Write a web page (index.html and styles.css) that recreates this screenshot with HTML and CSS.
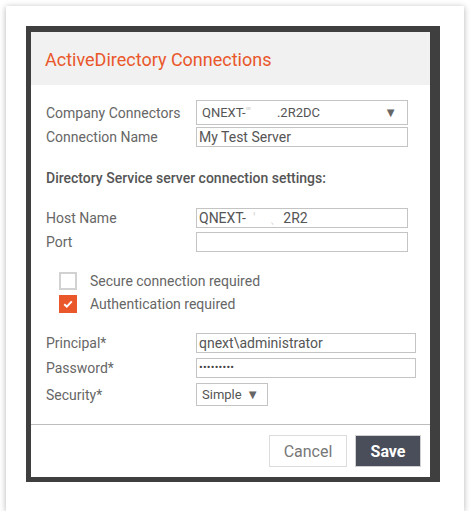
FILE: index.html
```html
<!DOCTYPE html>
<html lang="en">
<head>
  <meta charset="UTF-8" />
  <title>ActiveDirectory Connections</title>
  <link rel="stylesheet" href="styles.css">
</head>
<body>

  <div class="sheet">
    <div class="dialog">
      <div class="dialog-header">
        <h1>ActiveDirectory Connections</h1>
      </div>

      <div class="dialog-body">
        <div class="row row-select">
          <label>Company Connectors</label>
          <div class="select wide">
            <span>QNEXT-<span class="blur">'''</span>&nbsp;&nbsp;&nbsp;&nbsp;&nbsp;&nbsp;&nbsp;&nbsp;.2R2DC</span>
            <span class="arrow">&#9660;</span>
          </div>
        </div>
        <div class="row row-name">
          <label>Connection Name</label>
          <div class="input wide">My Test Server</div>
        </div>

        <div class="section-title">Directory Service server connection settings:</div>

        <div class="row row-host">
          <label>Host Name</label>
          <div class="input wide">QNEXT-<span class="blur">&nbsp;&nbsp;'&nbsp;&nbsp;&nbsp;&nbsp;&#12289;</span>2R2</div>
        </div>
        <div class="row row-port">
          <label>Port</label>
          <div class="input wide"></div>
        </div>

        <div class="check check-first">
          <span class="box"></span>
          <span>Secure connection required</span>
        </div>
        <div class="check">
          <span class="box checked">
            <svg width="10" height="8" viewBox="0 0 10 8"><path d="M1.2 4.2 L3.8 6.6 L8.8 1.4" fill="none" stroke="#fff" stroke-width="2"/></svg>
          </span>
          <span>Authentication required</span>
        </div>

        <div class="row row-principal">
          <label>Principal*</label>
          <div class="input wider">qnext\administrator</div>
        </div>
        <div class="row row-password">
          <label>Password*</label>
          <div class="input wider dots">&bull;&bull;&bull;&bull;&bull;&bull;&bull;&bull;&bull;</div>
        </div>
        <div class="row row-security">
          <label>Security*</label>
          <div class="select small">
            <span>Simple</span>
            <span class="arrow">&#9660;</span>
          </div>
        </div>
      </div>

      <div class="dialog-footer">
        <button class="btn btn-cancel">Cancel</button>
        <button class="btn btn-save">Save</button>
      </div>
    </div>
  </div>

</body>
</html>
```

FILE: styles.css
```css
body {
  margin: 0;
  background: #fff;
  font-family: Roboto, 'Liberation Sans', sans-serif;
}

.sheet {
  margin: 6px 0 0 6px;
  width: 414px;
  height: 456px;
  padding: 20px 24px 29px 20px;
  background: #fff;
  box-shadow: 0 1px 6px rgba(0, 0, 0, 0.3);
}

.dialog {
  width: 399px;
  border-style: solid;
  border-color: #3f3f3f;
  border-width: 6px 10px 5px 5px;
  background: #fff;
}

.dialog-header {
  height: 53px;
  background: #f1f1f1;
  display: flex;
  align-items: center;
  padding-left: 14px;
}

.dialog-header h1 {
  margin: 0;
  font-size: 18px;
  font-weight: 400;
  color: #e9572b;
  padding-top: 2px;
}

.dialog-body {
  padding: 15px 0 18px 15px;
  border-bottom: 1px solid #bdbdbd;
}

.row {
  display: flex;
  align-items: center;
  font-size: 14px;
  color: #666;
}

.row label {
  width: 150px;
  flex: none;
}

.input {
  height: 18px;
  border: 1px solid #c4c4c4;
  padding: 0 2px;
  font-size: 14px;
  line-height: 18px;
  color: #555;
  box-sizing: content-box;
  white-space: nowrap;
}

.wide { width: 206px; }
.wider { width: 214px; }

.dots {
  font-size: 11px;
  letter-spacing: 0.2px;
  color: #444;
}

.select {
  display: flex;
  align-items: center;
  justify-content: space-between;
  border: 1px solid #c4c4c4;
  padding: 0 10px 0 5px;
  font-size: 13px;
  color: #555;
  white-space: nowrap;
}

.select.wide {
  width: 195px;
  height: 23px;
}

.select.small {
  width: 57px;
  height: 21px;
  padding-right: 8px;
}

.arrow {
  font-size: 13px;
  color: #666;
}

.blur {
  color: #d6d6d6;
}

.row-name { margin-top: 2px; }

.section-title {
  margin-top: 21px;
  height: 20px;
  line-height: 20px;
  font-size: 14px;
  font-weight: 500;
  color: #555;
}

.row-host { margin-top: 20px; }
.row-port { margin-top: 4px; }

.check {
  display: flex;
  align-items: center;
  height: 20px;
  margin-top: 3px;
  padding-left: 13px;
  font-size: 14px;
  color: #666;
}

.check-first { margin-top: 19px; }

.check .box {
  width: 14px;
  height: 14px;
  border: 2px solid #d2d2d2;
  margin-right: 13px;
  display: flex;
  align-items: center;
  justify-content: center;
}

.check .box.checked {
  background: #e9572b;
  border-color: #e9572b;
}

.row-principal { margin-top: 19px; }
.row-password { margin-top: 5px; }
.row-security { margin-top: 5px; }

.dialog-footer {
  display: flex;
  justify-content: flex-end;
  gap: 8px;
  padding: 10px 9px 10px 0;
}

.btn {
  height: 32px;
  font-family: Roboto, 'Liberation Sans', sans-serif;
  font-size: 16px;
  cursor: pointer;
}

.btn-cancel {
  width: 78px;
  background: #fff;
  border: 1px solid #dcdcdc;
  color: #777;
}

.btn-save {
  width: 66px;
  background: #4a4d5a;
  border: 1px solid #d0d0d0;
  color: #fff;
  font-weight: 700;
}
```
